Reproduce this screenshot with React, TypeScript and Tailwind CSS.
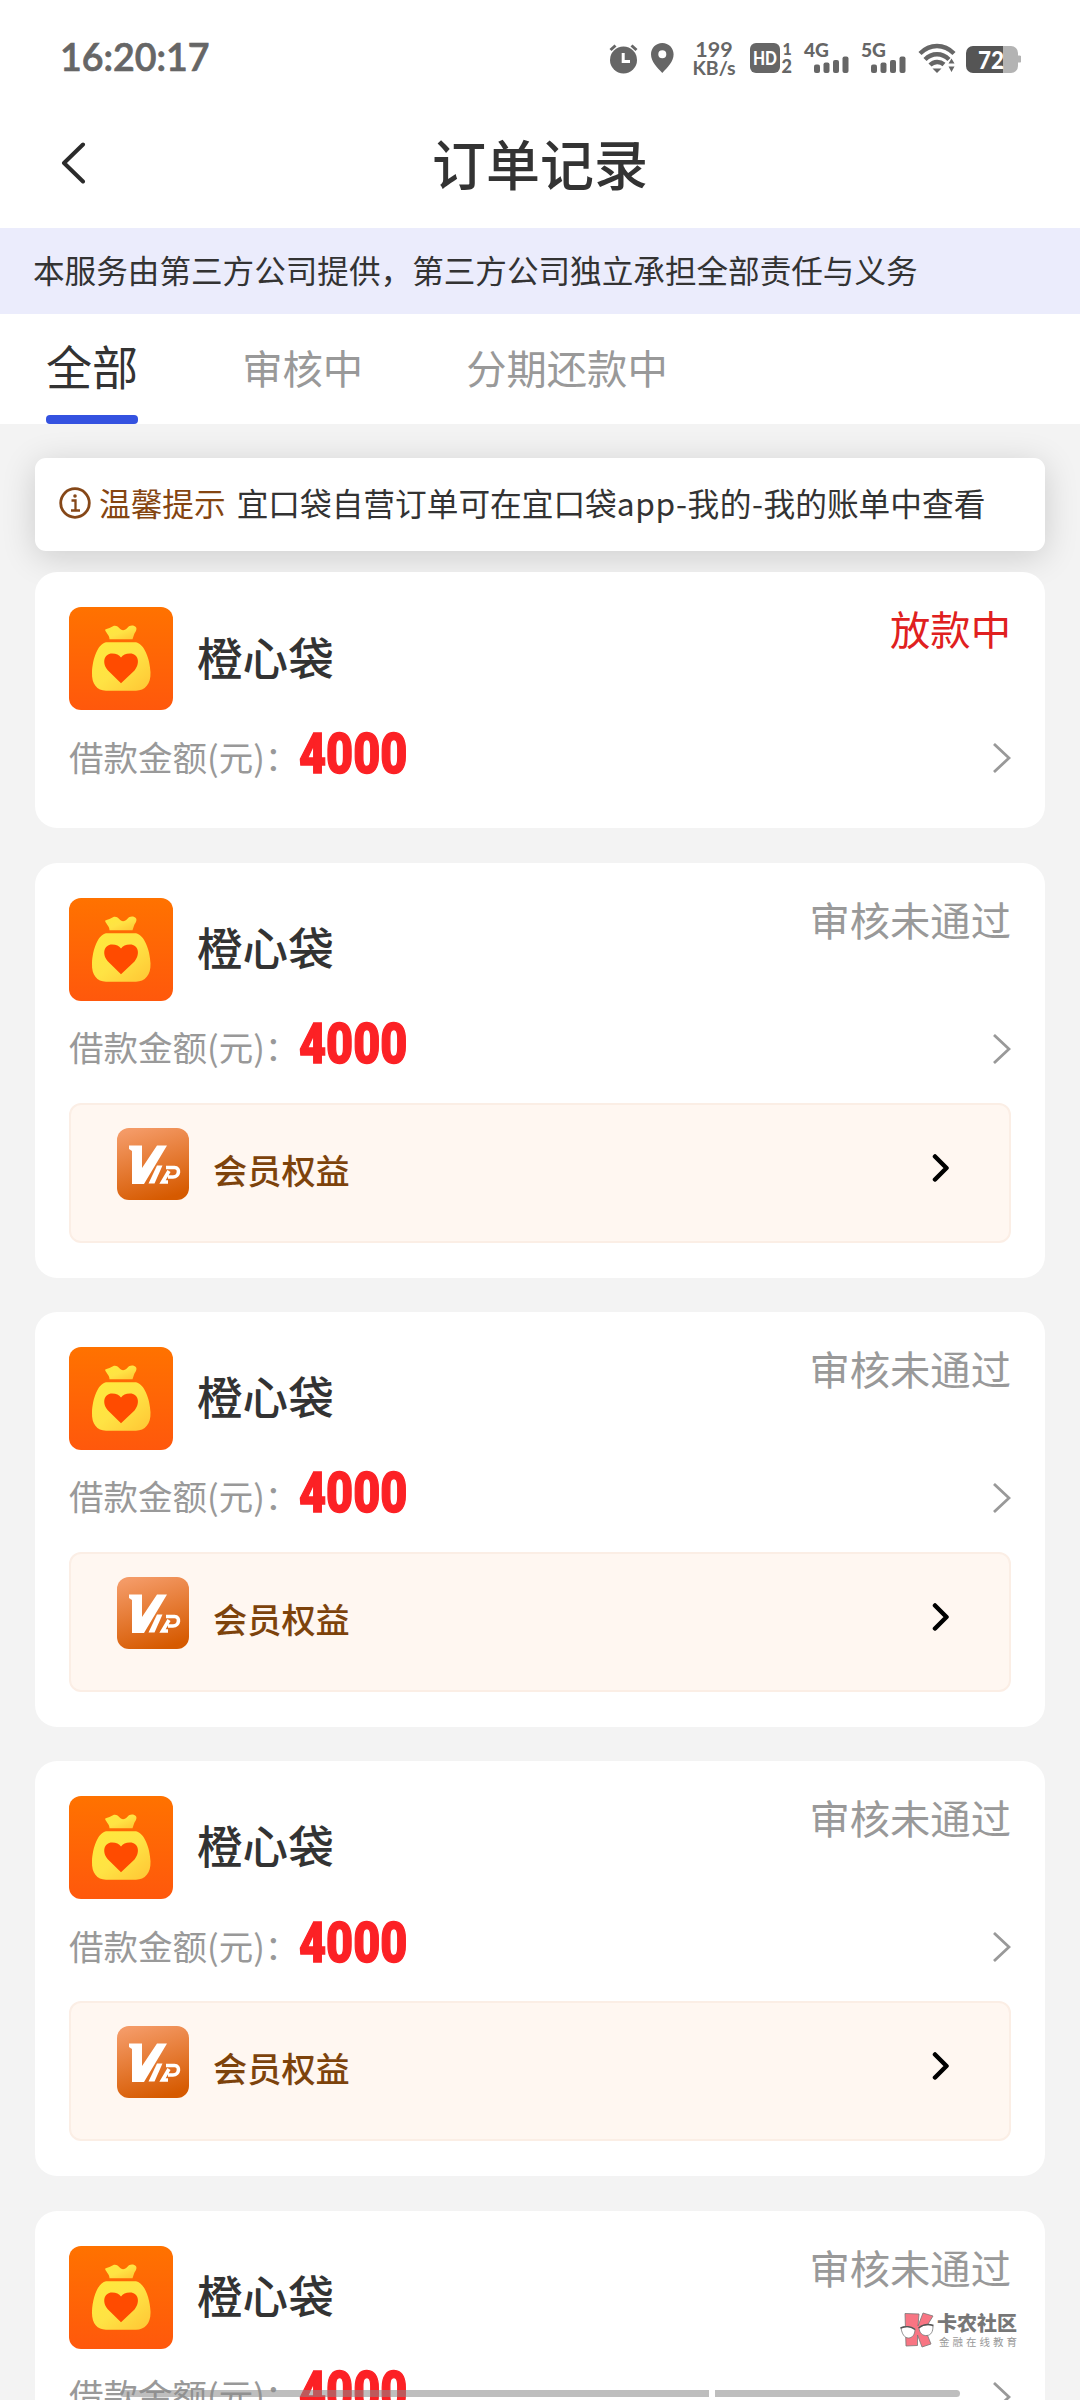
import clsx from 'clsx';

const orders = [
  { id: 1, name: '橙心袋', amount: '4000', status: '放款中', active: true, vip: false },
  { id: 2, name: '橙心袋', amount: '4000', status: '审核未通过', active: false, vip: true },
  { id: 3, name: '橙心袋', amount: '4000', status: '审核未通过', active: false, vip: true },
  { id: 4, name: '橙心袋', amount: '4000', status: '审核未通过', active: false, vip: true },
  { id: 5, name: '橙心袋', amount: '4000', status: '审核未通过', active: false, vip: true },
];

// Mobile signal: network type on top left, bars on the bottom right
const Signal = ({ type }: { type: string }) => (
  <svg className="overflow-visible" width="46" height="32" viewBox="0 0 46 32" fill="#666">
    <text x="0" y="14.5" fontSize="19" fontWeight="900" textLength="25" lengthAdjust="spacingAndGlyphs">{type}</text>
    <rect x="10" y="22.5" width="6" height="8.5" rx="2" />
    <rect x="19.5" y="20.5" width="6" height="10.5" rx="2" />
    <rect x="29" y="18" width="6" height="13" rx="2" />
    <rect x="38.5" y="14.5" width="6" height="16.5" rx="2" />
  </svg>
);

const StatusBar = () => (
  <div className="flex h-[116px] items-center pl-[60px] pr-[59px] text-[#666]">
    <span className="pb-[3px] font-['Lato'] text-[37.5px] font-semibold leading-none [-webkit-text-stroke:0.7px_#666]">16:20:17</span>
    <div className="ml-auto flex items-center font-['Lato']">
      <svg width="32" height="32" viewBox="0 0 32 32" fill="#666">
        <circle cx="15.5" cy="18" r="13.5" />
        <path d="M2.5 8L7.5 3.5M28.5 8L23.5 3.5" stroke="#666" strokeWidth="3" />
        <path d="M15.2 11v8.5H22" stroke="#fff" strokeWidth="3" fill="none" />
      </svg>
      <svg className="ml-[10px]" width="25" height="32" viewBox="0 0 25 32" fill="#666">
        <path fillRule="evenodd" d="M12.3 1C5.8 1 1 6 1 12.3 1 19.5 7 25.5 12.3 31 17.6 25.5 23.6 19.5 23.6 12.3 23.6 6 18.8 1 12.3 1zm0 7.3a4 4 0 1 1 0 8 4 4 0 0 1 0-8z" />
      </svg>
      <div className="ml-[17px] flex w-[44px] flex-col items-center font-bold">
        <span className="text-[21.5px] leading-[19px]">199</span>
        <span className="text-[19.5px] leading-[18px]">KB/s</span>
      </div>
      <svg className="ml-[14px] overflow-visible" width="43" height="32" viewBox="0 0 43 32" fill="#666">
        <rect x="0" y="1" width="30" height="30" rx="6" />
        <text x="3" y="22.5" fontSize="18" fontWeight="900" fill="#fff" textLength="24" lengthAdjust="spacingAndGlyphs">HD</text>
        <text x="32.5" y="12.5" fontSize="16" fontWeight="900">1</text>
        <text x="31.5" y="31" fontSize="18" fontWeight="900">2</text>
      </svg>
      <div className="ml-[11px] flex gap-[11px]">
        <Signal type="4G" />
        <Signal type="5G" />
      </div>
      <svg className="ml-[11px]" width="38" height="32" viewBox="0 0 38 32" fill="none" stroke="#666" strokeWidth="4.4">
        <path d="M2 11.5C12 1.5 26 1.5 36 11.5" />
        <path d="M7 17.5C14 10.5 24 10.5 31 17.5" />
        <path d="M12 23C16 19 22 19 26 22.5" />
        <path d="M14.5 26.5h9L19 31z" fill="#666" stroke="none" />
        <path d="M30.5 21.5h6L33.5 16.5zM30.5 24.5h6L33.5 30z" fill="#666" stroke="none" />
      </svg>
      <svg className="ml-[10px]" width="55" height="32" viewBox="0 0 55 32">
        <path d="M37 4h8a7 7 0 0 1 7 7v2.5h1.5a2 2 0 0 1 2 2v3a2 2 0 0 1-2 2H52V24a7 7 0 0 1-7 7h-8z" fill="#b3b3b3" />
        <path d="M37 4H7a7 7 0 0 0-7 7v13a7 7 0 0 0 7 7h30z" fill="#555" />
        <text x="12" y="26.5" fontSize="25" fontWeight="900" fill="#fff" textLength="26" lengthAdjust="spacingAndGlyphs">72</text>
      </svg>
    </div>
  </div>
);

const BagIcon = () => (
  <svg className="rounded-[12px]" width="104" height="103" viewBox="0 0 104 104" preserveAspectRatio="none">
    <defs>
      <linearGradient id="bagBg" x1="0" y1="0" x2="0" y2="1">
        <stop offset="0" stopColor="#ff7200" />
        <stop offset="1" stopColor="#ff580c" />
      </linearGradient>
      <linearGradient id="bagFill" x1="0" y1="0" x2="1" y2="1">
        <stop offset="0" stopColor="#ffe93a" />
        <stop offset="0.5" stopColor="#ffe344" />
        <stop offset="1" stopColor="#ffc534" />
      </linearGradient>
    </defs>
    <rect width="104" height="104" fill="url(#bagBg)" />
    <path d="M36 23C38 21.5 40 22 42 20.5 45 18 48 18.5 50 21 52.5 24.5 56 24 58.5 21 60.5 18 65 18 67 20.5 68.5 23 66 25.5 65 28L63.5 32.5H40.5C40.5 28.5 37.5 27 36 23z" fill="url(#bagFill)" />
    <path d="M37 35.5H67C75 37 81 52 81.5 66 82 78 76 84.5 67 84.5H37C28 84.5 22.5 78 23 66 23.5 52 29 37 37 35.5z" fill="url(#bagFill)" />
    <path d="M52 77L39 64C32.5 57 35 47 43 47 47.5 47 50 48.5 52 51 54 48.5 56.5 47 61 47 69.5 47 71.5 57 65.5 64z" fill="#ff4b00" />
  </svg>
);

const VipIcon = () => (
  <svg width="72" height="72" viewBox="0 0 72 72">
    <defs>
      <linearGradient id="vipBg" x1="0.3" y1="0" x2="0.6" y2="1">
        <stop offset="0" stopColor="#f49a66" />
        <stop offset="1" stopColor="#d65a00" />
      </linearGradient>
    </defs>
    <rect width="72" height="72" rx="12" fill="url(#vipBg)" />
    {/* big V with a small serif, then the slanted I and P */}
    <path d="M12 17.5H25V40L40 17.5H50L27 56H15V23L12 21z" fill="#fff" />
    <path d="M40 37.5H45.5L37.5 55.5H31.5z" fill="#fff" />
    <path d="M49 39.5H57.5C63.5 39.5 62.5 49 56 49H51M52 43L45.5 54H51" fill="none" stroke="#fff" strokeWidth="3.6" />
  </svg>
);

const Chevron = ({ bold }: { bold?: boolean }) =>
  bold ? (
    <svg width="18" height="30" viewBox="0 0 18 30" fill="none" stroke="#000" strokeWidth="4.5" strokeLinecap="round" strokeLinejoin="round">
      <path d="M3 3.5L14.5 15 3 26.5" />
    </svg>
  ) : (
    <svg width="18" height="30" viewBox="0 0 18 30" fill="none" stroke="#999" strokeWidth="2.8">
      <path d="M1 1L16 15 1 29" />
    </svg>
  );

const OrderCard = ({ order }: { order: (typeof orders)[number] }) => (
  <div className="shrink-0 rounded-[22px] bg-white px-[34px] pb-6 pt-[35px]">
    <div className="flex h-[103px] items-center">
      <BagIcon />
      <span className="ml-6 pb-[5px] text-[45.6px] font-medium leading-none text-[#333]">{order.name}</span>
      <span
        className={clsx(
          'ml-auto self-start pt-px text-[40.32px] leading-[40px]',
          order.active ? 'text-[#e02020]' : 'text-[#999]'
        )}
      >
        {order.status}
      </span>
    </div>
    <div className="flex h-[94px] items-center">
      <span className="whitespace-nowrap pb-[3px] text-[34.5px] leading-none text-[#999]">借款金额(元)：</span>
      <span className="origin-left scale-x-[0.85] pb-[6px] font-['Roboto'] text-[55px] font-black leading-none text-[#fc2125] [-webkit-text-stroke:1.4px_#fc2125]">
        {order.amount}
      </span>
      <span className="ml-auto pt-[2px]">
        <Chevron />
      </span>
    </div>
    {order.vip && (
      <div className="mb-[11px] mt-2 flex h-[140px] items-start rounded-[12px] border-2 border-[#fbeee5] bg-[#fff7f1] pl-[46px] pr-[59px] pt-[23px]">
        <VipIcon />
        <span className="ml-6 mt-[24px] text-[34.2px] font-medium leading-[35px] text-[#7d430c]">会员权益</span>
        <span className="ml-auto mt-[25px]">
          <Chevron bold />
        </span>
      </div>
    )}
  </div>
);

// Community logo laid over the bottom right corner
const Watermark = () => (
  <div className="absolute left-[900px] top-[2312px] flex items-center">
    <svg width="35" height="36" viewBox="0 0 35 36" stroke="#777" strokeWidth="0.8">
      <path d="M5 1.5L19 2 18 14 23 1 33 4 25 17 31 32 22 35 17.5 23 17.5 33.5 6 34z" fill="#f87583" />
      <path d="M1 16C5 14 11 14 15 17 15 23 12 26 8.5 26 4.5 26 2 22 1 16zM19 16C23 12 29 12 33 14 33 20 31 23 27 23.5 22.5 24 19.5 21 19 16z" fill="#fff" />
      <path d="M0.5 16C5 14 11 14 15 17.5M18.5 16C23 12.5 29 12 33.5 13.5" fill="none" strokeWidth="1.5" stroke="#555" />
    </svg>
    <div className="ml-[2px] flex flex-col">
      <span className="whitespace-nowrap text-[20px] font-black leading-[20px] text-[#777]">卡农社区</span>
      <span className="mt-[3px] whitespace-nowrap pl-[2px] text-[10.5px] leading-[12px] tracking-[3px] text-[#999]">金融在线教育</span>
    </div>
  </div>
);

const App = () => {
  return (
    <div className="relative flex h-[2400px] w-[1080px] flex-col overflow-hidden bg-[#f3f3f3] font-['Noto_Sans_CJK_SC',sans-serif]">
      <div className="shrink-0 bg-white">
        <StatusBar />
        <div className="flex h-28 items-center justify-between px-[61px] pb-[18px]">
          <svg width="25" height="42" viewBox="0 0 25 42" fill="none" stroke="#2b2b2b" strokeWidth="4" strokeLinecap="round" strokeLinejoin="round">
            <path d="M22 2.5L3 21 22 39.5" />
          </svg>
          <h1 className="pb-px text-[54px] font-medium leading-none text-[#333]">订单记录</h1>
          <span className="w-[25px]" />
        </div>
      </div>

      <div className="flex h-[86px] shrink-0 items-center bg-[#ebecfc] pb-[2px] pl-[33px] text-[31.6px] leading-none text-[#333]">
        本服务由第三方公司提供，第三方公司独立承担全部责任与义务
      </div>

      <div className="flex h-[110px] shrink-0 bg-white pl-[46px]">
        <div className="flex flex-col items-center justify-between">
          <span className="pt-[28px] text-[46.08px] leading-[46px] text-[#333]">全部</span>
          <span className="h-[9px] w-[92px] rounded-[4px] bg-[#3452e0]" />
        </div>
        <span className="ml-[104px] pt-[33px] text-[40.32px] leading-[40px] text-[#999]">审核中</span>
        <span className="ml-[103px] pt-[33px] text-[40.32px] leading-[40px] text-[#999]">分期还款中</span>
      </div>

      <div className="flex flex-col px-[35px] pt-[34px]">
        <div className="flex h-[93px] shrink-0 items-center whitespace-nowrap rounded-[11px] bg-white pl-6 text-[31.68px] leading-none shadow-[0_6px_34px_rgba(0,0,0,0.16)]">
          <svg className="mb-[3px]" width="32" height="32" viewBox="0 0 32 32" fill="none" stroke="#854718" strokeWidth="2.8">
            <circle cx="16" cy="16" r="14.3" />
            <path d="M12.5 13.5H16.5V23.5M12 23.5H21" strokeWidth="2.3" />
            <circle cx="16" cy="9" r="1.8" fill="#854718" stroke="none" />
          </svg>
          <span className="ml-[8px] pb-[4px] text-[#854510]">温馨提示</span>
          <span className="ml-[11px] pb-[4px] text-[#333]">
            宜口袋自营订单可在宜口袋<span className="tracking-[0.6px]">app-我的-</span>我的账单中查看
          </span>
        </div>
        <div className="relative mt-[21.4px] flex flex-col gap-[34.3px]">
          {orders.map((order) => (
            <OrderCard key={order.id} order={order} />
          ))}
        </div>
      </div>

      <Watermark />

      {/* gesture bar */}
      <div className="absolute left-[120px] top-[2390px] flex gap-[6px]">
        <span className="h-[7px] w-[589px] rounded-l-full bg-[#888]/55" />
        <span className="h-[7px] w-[245px] rounded-r-full bg-[#888]/55" />
      </div>
    </div>
  );
};

export default App;
